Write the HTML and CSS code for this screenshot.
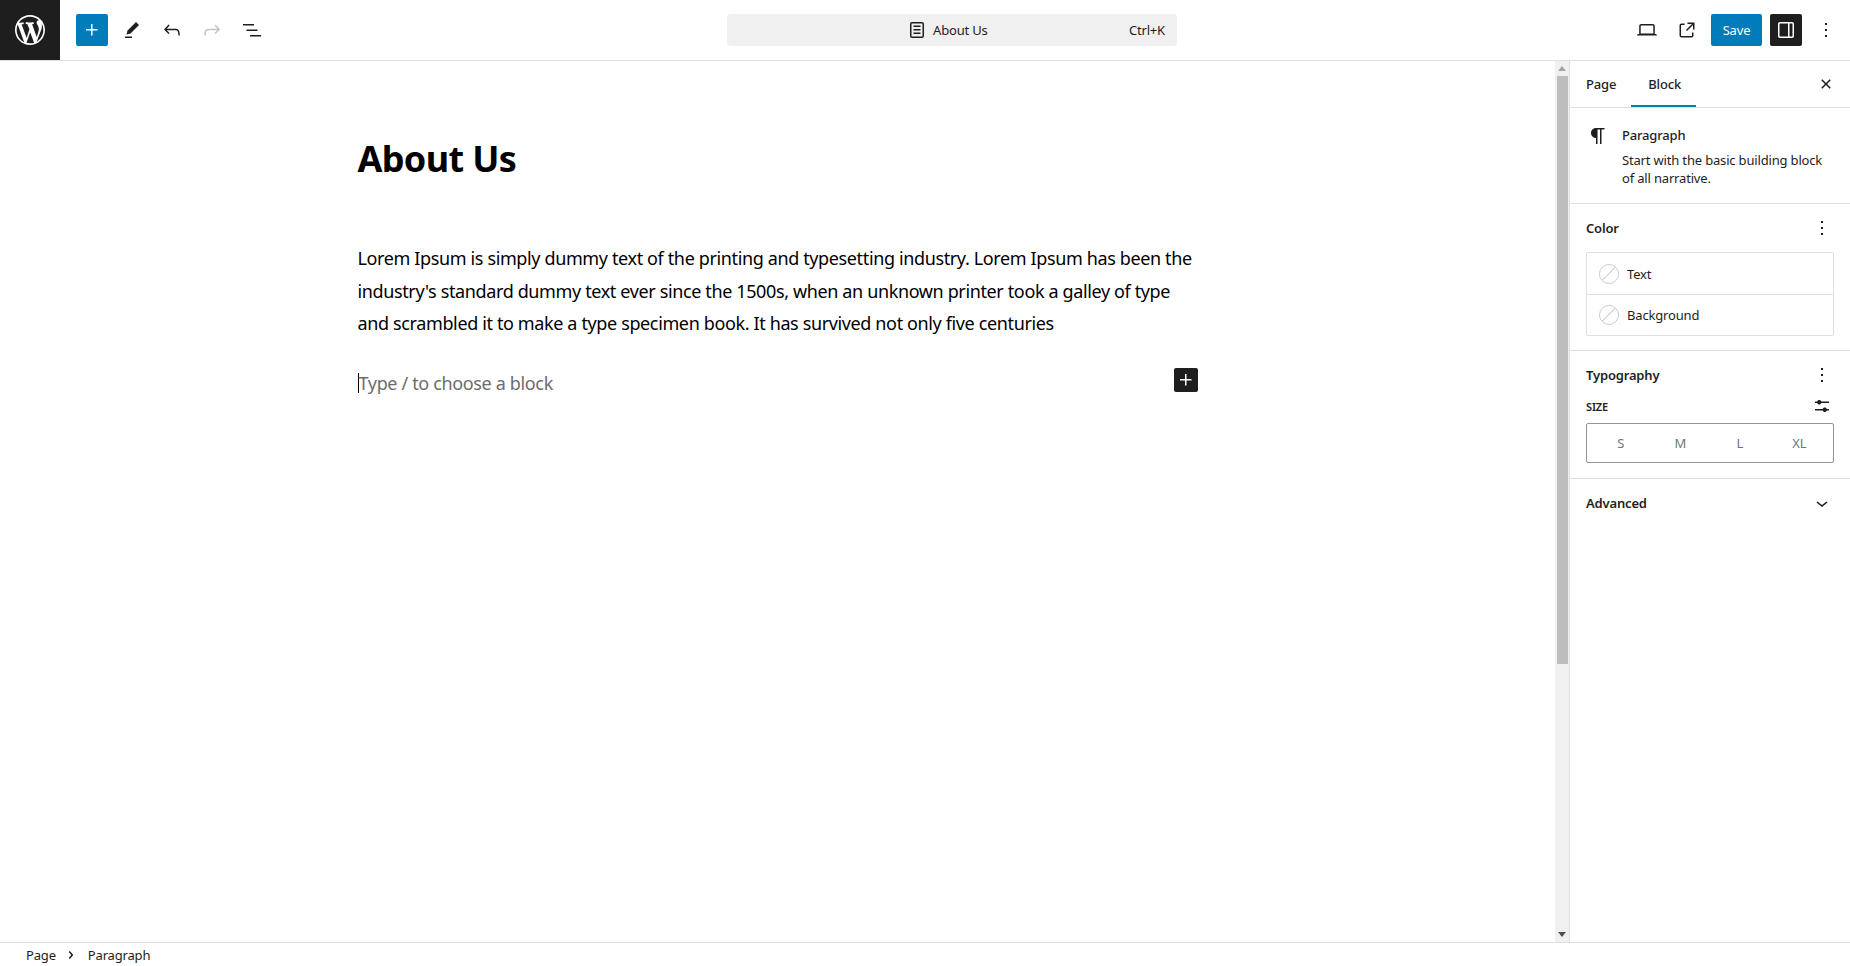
FILE: index.html
```html
<!DOCTYPE html>
<html lang="en">
<head>
  <meta charset="UTF-8" />
  <title>Edit Page — About Us</title>
  <link rel="stylesheet" href="styles.css">
</head>
<body>

<!-- TOP BAR -->
<header class="topbar">
  <div class="logo">
    <svg width="36" height="36" viewBox="-2 -2 24 24"><path d="M20 10c0-5.51-4.49-10-10-10C4.48 0 0 4.49 0 10c0 5.52 4.48 10 10 10 5.51 0 10-4.48 10-10zM7.78 15.37L4.37 6.22c.55-.02 1.17-.08 1.17-.08.5-.06.44-1.13-.06-1.11 0 0-1.45.11-2.37.11-.18 0-.37 0-.58-.01C4.12 2.69 6.87 1.11 10 1.11c2.33 0 4.45.87 6.05 2.34-.68-.11-1.65.39-1.65 1.58 0 .74.45 1.36.9 2.1.35.61.55 1.36.55 2.46 0 1.49-1.4 5-1.4 5l-3.03-8.37c.54-.02.82-.17.82-.17.5-.05.44-1.25-.06-1.22 0 0-1.44.12-2.38.12-.87 0-2.33-.12-2.33-.12-.5-.03-.56 1.2-.06 1.22l.92.08 1.26 3.41zM17.41 10c.24-.64.74-1.87.43-4.25.7 1.29 1.05 2.71 1.05 4.25 0 3.29-1.73 6.24-4.4 7.78.97-2.59 1.94-5.2 2.92-7.78zM6.1 18.09C3.12 16.65 1.11 13.53 1.11 10c0-1.3.23-2.48.72-3.59C3.25 10.3 4.67 14.2 6.1 18.09zm4.03-6.63l2.58 6.98c-.86.29-1.76.45-2.71.45-.79 0-1.57-.11-2.29-.33.81-2.38 1.62-4.74 2.42-7.1z"/></svg>
  </div>

  <div class="tools">
    <button class="icon-btn primary"><svg width="24" height="24" viewBox="0 0 24 24"><path d="M11 12.5V17.5H12.5V12.5H17.5V11H12.5V6H11V11H6V12.5H11Z"/></svg></button>
    <button class="icon-btn"><svg width="24" height="24" viewBox="0 0 24 24"><path d="m19 7-3-3-8.5 8.5-1 4 4-1L19 7Zm-7 11.5H5V20h7v-1.5Z"/></svg></button>
    <button class="icon-btn"><svg width="24" height="24" viewBox="0 0 24 24"><path d="M18.3 11.7c-.6-.6-1.4-.9-2.3-.9H6.7l2.9-3.3-1.1-1-4.5 5L8.5 16l1-1-2.7-2.7H16c.5 0 .9.2 1.3.5 1 1 1 3.4 1 4.5v.3h1.5v-.2c0-1.5 0-4.3-1.5-5.7z"/></svg></button>
    <button class="icon-btn disabled"><svg width="24" height="24" viewBox="0 0 24 24"><path d="M15.6 6.5l-1.1 1 2.9 3.3H8c-.9 0-1.7.3-2.3.9-1.4 1.5-1.4 4.2-1.4 5.6v.2h1.5v-.3c0-1.1 0-3.5 1-4.5.3-.3.7-.5 1.3-.5h9.2L14.5 15l1.1 1.1 4.6-4.6-4.6-5z"/></svg></button>
    <button class="icon-btn"><svg width="24" height="24" viewBox="0 0 24 24"><path d="M3 6h11v1.5H3V6Zm3.5 5.5h11V13h-11v-1.5ZM21 17H10v1.5h11V17Z"/></svg></button>
  </div>

  <div class="command-wrap">
    <div class="command">
      <div class="command-title">
        <svg width="24" height="24" viewBox="0 0 24 24"><path d="M15.5 7.5h-7V9h7V7.5Zm-7 3.5h7v1.5h-7V11Zm7 3.5h-7V16h7v-1.5Z"/><path d="M17 4H7a2 2 0 0 0-2 2v12a2 2 0 0 0 2 2h10a2 2 0 0 0 2-2V6a2 2 0 0 0-2-2ZM7 5.5h10a.5.5 0 0 1 .5.5v12a.5.5 0 0 1-.5.5H7a.5.5 0 0 1-.5-.5V6a.5.5 0 0 1 .5-.5Z"/></svg>
        <span>About Us</span>
      </div>
      <span class="shortcut">Ctrl+K</span>
    </div>
  </div>

  <div class="actions">
    <button class="icon-btn wide"><svg width="24" height="24" viewBox="0 0 24 24"><path d="M20.5 16h-.7V8c0-1.1-.9-2-2-2H6.2c-1.1 0-2 .9-2 2v8h-.7c-.8 0-1.5.7-1.5 1.5h20c0-.8-.7-1.5-1.5-1.5zM5.7 8c0-.3.2-.5.5-.5h11.6c.3 0 .5.2.5.5v7.6H5.7V8z"/></svg></button>
    <button class="icon-btn wide"><svg width="24" height="24" viewBox="0 0 24 24"><path d="M19.5 4.5h-7V6h4.44l-5.97 5.97 1.06 1.06L18 7.06v4.44h1.5v-7Zm-13 1a2 2 0 0 0-2 2v10a2 2 0 0 0 2 2h10a2 2 0 0 0 2-2v-3H17v3a.5.5 0 0 1-.5.5h-10a.5.5 0 0 1-.5-.5v-10a.5.5 0 0 1 .5-.5h3V5.5h-3Z"/></svg></button>
    <button class="save">Save</button>
    <button class="icon-btn dark"><svg width="24" height="24" viewBox="0 0 24 24"><path d="M18 4H6c-1.1 0-2 .9-2 2v12c0 1.1.9 2 2 2h12c1.1 0 2-.9 2-2V6c0-1.1-.9-2-2-2zm-4 14.5H6c-.3 0-.5-.2-.5-.5V6c0-.3.2-.5.5-.5h8v13zm4.5-.5c0 .3-.2.5-.5.5h-2.5v-13H18c.3 0 .5.2.5.5v12z"/></svg></button>
    <button class="icon-btn more"><svg width="24" height="24" viewBox="0 0 24 24"><path d="M13 19h-2v-2h2v2zm0-6h-2v-2h2v2zm0-6h-2V5h2v2z"/></svg></button>
  </div>
</header>

<div class="workspace">

  <!-- EDITOR -->
  <main class="editor">
    <div class="canvas">
      <h1 class="page-title">About Us</h1>
      <p class="body-text">Lorem Ipsum is simply dummy text of the printing and typesetting industry. Lorem Ipsum has been the industry's standard dummy text ever since the 1500s, when an unknown printer took a galley of type and scrambled it to make a type specimen book. It has survived not only five centuries</p>
      <div class="empty-block">
        <span class="placeholder">Type / to choose a block</span>
        <button class="inserter"><svg width="24" height="24" viewBox="0 0 24 24"><path d="M11 12.5V17.5H12.5V12.5H17.5V11H12.5V6H11V11H6V12.5H11Z"/></svg></button>
      </div>
    </div>
  </main>

  <div class="scrollbar">
    <div class="arrow up"></div>
    <div class="thumb"></div>
    <div class="track-rest"></div>
    <div class="arrow down"></div>
  </div>

  <!-- SIDEBAR -->
  <aside class="sidebar">
    <div class="tabs">
      <div class="tab">Page</div>
      <div class="tab active">Block</div>
      <button class="icon-btn close"><svg width="24" height="24" viewBox="0 0 24 24"><path d="M12 13.06l3.712 3.713 1.061-1.06L13.061 12l3.712-3.712-1.06-1.06L12 10.938 8.288 7.227l-1.061 1.06L10.939 12l-3.712 3.712 1.06 1.061L12 13.061z"/></svg></button>
    </div>

    <section class="block-card">
      <svg width="24" height="24" viewBox="0 0 24 24"><path d="m9.99609 14v-.2251l.00391.0001v6.225h1.5v-14.5h2.5v14.5h1.5v-14.5h3v-1.5h-8.50391c-2.76142 0-5 2.23858-5 5 0 2.7614 2.23858 5 5 5z"/></svg>
      <div>
        <h2 class="block-name">Paragraph</h2>
        <p class="block-desc">Start with the basic building block of all narrative.</p>
      </div>
    </section>

    <section class="panel color-panel">
      <div class="panel-head">
        <h2>Color</h2>
        <svg width="24" height="24" viewBox="0 0 24 24"><path d="M13 19h-2v-2h2v2zm0-6h-2v-2h2v2zm0-6h-2V5h2v2z"/></svg>
      </div>
      <div class="color-list">
        <div class="color-row"><span class="swatch"></span>Text</div>
        <div class="color-row"><span class="swatch"></span>Background</div>
      </div>
    </section>

    <section class="panel type-panel">
      <div class="panel-head">
        <h2>Typography</h2>
        <svg width="24" height="24" viewBox="0 0 24 24"><path d="M13 19h-2v-2h2v2zm0-6h-2v-2h2v2zm0-6h-2V5h2v2z"/></svg>
      </div>
      <div class="size-head">
        <span>Size</span>
        <svg width="24" height="24" viewBox="0 0 24 24"><path d="m19 7.5h-7.628c-.3089-.87389-1.1423-1.5-2.122-1.5-.97966 0-1.81309.62611-2.12197 1.5h-2.12803v1.5h2.12803c.30888.87389 1.14231 1.5 2.12197 1.5.9797 0 1.8131-.62611 2.122-1.5h7.628z"/><path d="m19 15h-2.128c-.3089-.8739-1.1423-1.5-2.122-1.5s-1.8131.6261-2.122 1.5h-7.628v1.5h7.628c.3089.8739 1.1423 1.5 2.122 1.5s1.8131-.6261 2.122-1.5h2.128z"/></svg>
      </div>
      <div class="size-toggle">
        <span>S</span><span>M</span><span>L</span><span>XL</span>
      </div>
    </section>

    <section class="panel advanced-panel">
      <div class="panel-head">
        <h2>Advanced</h2>
        <svg width="24" height="24" viewBox="0 0 24 24"><path d="M17.5 11.6L12 16l-5.5-4.4.9-1.2L12 14l4.5-3.6 1 1.2z"/></svg>
      </div>
    </section>
  </aside>
</div>

<!-- BREADCRUMB -->
<footer class="statusbar">
  <span>Page</span>
  <svg width="24" height="24" viewBox="0 0 24 24"><path d="M10.8622 8.04053L14.2805 12.0286L10.8622 16.0167L9.72327 15.0405L12.3049 12.0286L9.72327 9.01672L10.8622 8.04053Z"/></svg>
  <span>Paragraph</span>
</footer>

</body>
</html>
```

FILE: styles.css
```css
*, *::before, *::after { box-sizing: border-box; margin: 0; padding: 0; }

:root {
  --ink:    #1e1e1e;
  --blue:   #007cba;
  --line:   #e0e0e0;
  --font:   "Noto Sans", Arial, sans-serif;
}

html, body { height: 100%; }

body {
  display: flex;
  flex-direction: column;
  height: 966px;
  overflow: hidden;
  font-family: var(--font);
  font-size: 13px;
  letter-spacing: -0.17px;
  color: var(--ink);
  background: #fff;
}

svg { display: block; fill: currentColor; flex-shrink: 0; }

button {
  font-family: inherit;
  letter-spacing: inherit;
  color: inherit;
  background: none;
  border: 0;
  cursor: pointer;
}

/* ── TOP BAR ─────────────────────────────── */
.topbar {
  display: flex;
  align-items: center;
  height: 61px;
  flex-shrink: 0;
  border-bottom: 1px solid var(--line);
}

.logo {
  width: 60px;
  height: 60px;
  display: flex;
  align-items: center;
  justify-content: center;
  background: var(--ink);
  color: #fff;
}

.tools {
  display: flex;
  align-items: center;
  gap: 8px;
  margin-left: 16px;
}

.icon-btn {
  width: 32px;
  height: 32px;
  display: flex;
  align-items: center;
  justify-content: center;
  border-radius: 2px;
}

.icon-btn.primary { background: var(--blue); color: #fff; }
.icon-btn.disabled { color: #c4c4c4; }
.icon-btn.dark { background: var(--ink); color: #fff; }

.command-wrap {
  width: 450px;
  margin-left: 459px;
}

.command {
  display: flex;
  align-items: center;
  height: 32px;
  padding: 0 12px;
  background: #f0f0f0;
  border-radius: 4px;
}

.command-title {
  display: flex;
  align-items: center;
  gap: 4px;
  margin-left: 166px;
}

.shortcut { margin-left: auto; }

.actions {
  display: flex;
  align-items: center;
  margin-left: auto;
  padding-right: 8px;
}

.actions .wide { margin-right: 8px; }

.save {
  width: 51px;
  height: 32px;
  margin-right: 8px;
  font-size: 13px;
  color: #fff;
  background: var(--blue);
  border-radius: 2px;
}

.actions .more { margin-left: 8px; }

/* ── WORKSPACE ───────────────────────────── */
.workspace {
  display: flex;
  flex: 1;
  min-height: 0;
}

.editor {
  flex: 1;
  min-width: 0;
}

.canvas {
  width: 840px;
  margin: 0 auto;
  padding-top: 76px;
}

.page-title {
  font-size: 36px;
  font-weight: 700;
  line-height: 1.2;
  letter-spacing: -0.65px;
  color: #000;
}

.body-text {
  margin-top: 62px;
  font-size: 18px;
  line-height: 32.4px;
  letter-spacing: -0.37px;
  color: #000;
}

.empty-block {
  display: flex;
  align-items: center;
  justify-content: space-between;
  margin-top: 28px;
  height: 32px;
}

.placeholder {
  font-size: 18px;
  letter-spacing: -0.35px;
  color: #6c6c6c;
  border-left: 1px solid #000;
  line-height: 20px;
}

.inserter {
  width: 24px;
  height: 24px;
  margin-top: -7px;
  display: flex;
  align-items: center;
  justify-content: center;
  color: #fff;
  background: var(--ink);
  border-radius: 2px;
}

/* ── SCROLLBAR ───────────────────────────── */
.scrollbar {
  width: 14px;
  display: flex;
  flex-direction: column;
  align-items: center;
  background: #f0f0f0;
}

.arrow { flex-shrink: 0; width: 0; height: 0; margin: 5px 0; border: 4px solid transparent; }
.arrow.up { border-top: 0; border-bottom: 5px solid #a3a3a3; }
.arrow.down { border-bottom: 0; border-top: 5px solid #505050; }

.thumb {
  width: 11px;
  height: 588px;
  flex-shrink: 0;
  background: #bdbdbd;
}

.track-rest { flex: 1; }

/* ── SIDEBAR ─────────────────────────────── */
.sidebar {
  width: 281px;
  flex-shrink: 0;
  border-left: 1px solid var(--line);
}

.tabs {
  display: flex;
  align-items: center;
  height: 47px;
  padding-right: 8px;
  border-bottom: 1px solid var(--line);
}

.tab {
  height: 46px;
  padding: 0 15px 0 16px;
  line-height: 46px;
  font-weight: 500;
  font-size: 13px;
}

.tab.active {
  padding: 0 15px 0 17px;
  box-shadow: inset 0 -2px 0 var(--blue);
}

.close { margin-left: auto; }

.block-card {
  display: flex;
  gap: 12px;
  height: 96px;
  padding: 15px 16px 0;
  border-bottom: 1px solid var(--line);
}

.block-name {
  font-size: 13px;
  font-weight: 500;
  line-height: 24px;
}

.block-desc {
  font-size: 13px;
  line-height: 18px;
  margin-top: 4px;
}

.block-card svg { margin-top: 1px; }

.panel {
  padding: 0 16px;
  border-bottom: 1px solid var(--line);
}

.panel-head {
  display: flex;
  align-items: center;
  justify-content: space-between;
  height: 24px;
}

.panel-head h2 {
  font-size: 13px;
  font-weight: 600;
}

.color-panel { height: 147px; padding-top: 12px; }
.type-panel { height: 128px; padding-top: 12px; }
.advanced-panel { padding-top: 12px; border-bottom: 0; }

.color-list {
  margin-top: 12px;
  border: 1px solid var(--line);
  border-radius: 2px;
}

.color-row {
  display: flex;
  align-items: center;
  gap: 8px;
  height: 41px;
  padding: 0 12px;
}

.color-row + .color-row { border-top: 1px solid var(--line); }

.swatch {
  position: relative;
  width: 20px;
  height: 20px;
  border-radius: 50%;
  border: 1px solid #ccc;
  overflow: hidden;
}

.swatch::after {
  content: "";
  position: absolute;
  left: -2px;
  right: -2px;
  top: 8px;
  height: 1px;
  background: #ccc;
  transform: rotate(-45deg);
}

.size-head {
  display: flex;
  align-items: center;
  justify-content: space-between;
  margin-top: 7px;
  height: 24px;
  font-size: 11px;
  font-weight: 600;
  text-transform: uppercase;
}

.size-toggle {
  display: grid;
  grid-template-columns: repeat(4, 1fr);
  align-items: center;
  height: 40px;
  margin-top: 5px;
  padding: 0 4px;
  text-align: center;
  color: #757575;
  border: 1px solid #949494;
  border-radius: 2px;
}

/* ── BREADCRUMB ──────────────────────────── */
.statusbar {
  display: flex;
  align-items: center;
  height: 24px;
  flex-shrink: 0;
  padding-left: 26px;
  border-top: 1px solid var(--line);
  color: #1e1e1e;
}

.statusbar svg { margin: 0 5px 0 3px; }
```
